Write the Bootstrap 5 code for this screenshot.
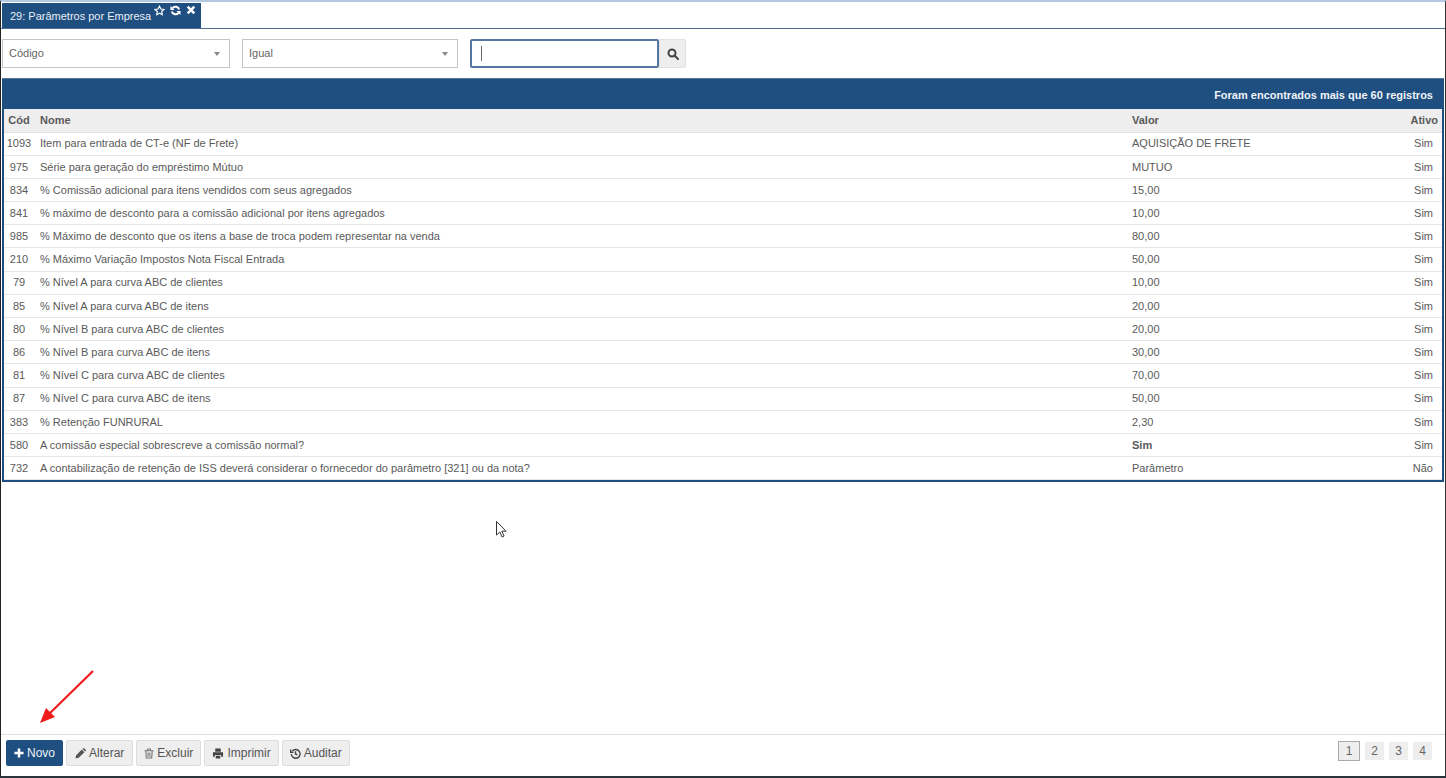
<!DOCTYPE html>
<html lang="pt-BR">
<head>
    <meta charset="UTF-8">
    <meta name="viewport" content="width=device-width, initial-scale=1.0">
    <title>Parâmetros por Empresa</title>
    <link href="https://cdn.jsdelivr.net/npm/bootstrap@5.3.3/dist/css/bootstrap.min.css" rel="stylesheet">
    <style>
        html, body { height: 100%; }
        body {
            font-family: "Liberation Sans", Arial, sans-serif;
            font-size: 11px;
            color: #555;
            background: #fff;
            overflow: hidden;
        }
        .app-frame {
            position: relative;
            height: 778px;
            display: flex;
            flex-direction: column;
            border-left: 1px solid #222;
            border-right: 1px solid #333;
            border-top: 2px solid #b4c9e4;
            border-bottom: 2px solid #2b333b;
        }
        .tab-strip {
            height: 27px;
            padding-left: 1px;
            padding-top: 1px;
            border-bottom: 1px solid #4d6f95;
        }
        .tab-item {
            width: 199px;
            height: 25px;
            background: #1f4e80;
            color: #e9eff6;
            padding: 5px 0 0 8px;
            display: flex;
            gap: 3px;
            white-space: nowrap;
        }
        .tab-icons { display: flex; gap: 5px; margin-top: -3px; height: 12px; }
        .filter-row { display: flex; margin: 10px 0 10px 1px; height: 29px; }
        .pick-box {
            height: 29px;
            border: 1px solid #c4c4c4;
            background: #fff;
            color: #666;
            padding: 0 9px 0 6px;
            display: flex;
            align-items: center;
            justify-content: space-between;
        }
        .pick-a { width: 228px; margin-right: 12px; }
        .pick-b { width: 216px; margin-right: 12px; }
        .pick-caret { width: 0; height: 0; border: 3px solid transparent; border-top: 4px solid #888; border-bottom: 0; }
        .search-box {
            width: 189px;
            height: 29px;
            border: 2px solid #56779f;
            border-radius: 2px;
            padding: 5px 0 0 9px;
        }
        .text-caret { width: 1px; height: 15px; background: #666; }
        .search-btn {
            width: 27px;
            height: 29px;
            background: #eee;
            border: 1px solid #e2e2e2;
            border-radius: 0 2px 2px 0;
            display: flex;
            align-items: center;
            justify-content: center;
        }
        .grid-panel {
            margin: 0 1px;
            border: 2px solid #1f4e80;
            border-top: 0;
        }
        .grid-title {
            height: 31px;
            background: #1f4e80;
            color: #eef3f8;
            font-weight: 700;
            margin: 0 -2px;
            padding: 8px 11px 0 0;
            text-align: right;
            border-top: 1px solid #55779c;
        }
        .data-grid { margin: 0; table-layout: fixed; color: #5a5a5a; font-size: 11px; }
        .data-grid > :not(caption) > * > * {
            padding: 0 0 0 6px;
            height: 23.2px;
            vertical-align: middle;
            color: #5a5a5a;
            border-bottom: 1px solid #e6e6e6;
            box-shadow: none;
            background: transparent;
        }
        .data-grid thead th { background: #eee; font-weight: 700; height: 23px; border-bottom: 1px solid #e2e2e2; }
        .data-grid .col-cod { width: 30px; text-align: center; padding: 0; }
        .data-grid td.col-ativo { text-align: right; padding: 0 9px 0 0; }
        .data-grid th.col-ativo { text-align: right; padding: 0 4px 0 0; width: 60px; }
        .col-name { width: 1092px; }
        .action-bar {
            margin-top: auto;
            height: 42px;
            border-top: 1px solid #ddd;
            padding: 5px 13px 0 5px;
            display: flex;
            justify-content: space-between;
        }
        .tool-row { display: flex; gap: 3px; height: 26px; }
        .tool-btn {
            height: 26px;
            padding: 0 7px;
            font-size: 12px;
            line-height: 1;
            color: #555;
            background: #eee;
            border: 1px solid #ddd;
            border-radius: 2px;
            display: inline-flex;
            align-items: center;
            gap: 3px;
        }
        .tool-btn.is-new { background: #1f4e80; border-color: #1f4e80; color: #eef3f8; }
        .tool-btn.is-edit { padding: 0 8px; }
        .page-row { display: flex; align-items: center; gap: 5px; height: 22px; }
        .page-cell {
            width: 19px;
            height: 18px;
            background: #eee;
            color: #666;
            font-size: 12px;
            display: flex;
            align-items: center;
            justify-content: center;
        }
        .page-cell.is-current { border: 1px solid #aaa; width: 22px; height: 20px; }
        .overlay-mark { position: absolute; pointer-events: none; }
    </style>
</head>
<body>
    <div class="app-frame">
        <div class="tab-strip">
            <div class="tab-item">
                <span>29: Parâmetros por Empresa</span>
                <span class="tab-icons">
                    <svg width="11" height="11" viewBox="0 0 24 24" fill="none" stroke="#fff" stroke-width="2.6"><path d="M12 2.500l2.900 6.300 6.900.8-5.100 4.700 1.400 6.800-6.100-3.400-6.100 3.400 1.400-6.800L1.900 9.600l6.900-.8z"/></svg>
                    <svg width="11" height="11" viewBox="0 0 24 24" fill="none" stroke="#fff" stroke-width="4.500"><path d="M20 10A8.500 8.500 0 0 0 5.500 6.500M4 14a8.500 8.500 0 0 0 14.500 3.500"/><path d="M1 2v9h9zM23 22v-9h-9z" fill="#fff" stroke="none"/></svg>
                    <svg width="10" height="10" viewBox="0 0 24 24" fill="none" stroke="#fff" stroke-width="6"><path d="M4 4l16 16M20 4L4 20"/></svg>
                </span>
            </div>
        </div>
        <div class="filter-row">
            <div class="pick-box pick-a"><span>Código</span><span class="pick-caret"></span></div>
            <div class="pick-box pick-b"><span>Igual</span><span class="pick-caret"></span></div>
            <div class="search-box"><div class="text-caret"></div></div>
            <div class="search-btn">
                <svg width="12" height="12" viewBox="0 0 24 24" fill="none" stroke="#444" stroke-width="4"><circle cx="10" cy="10" r="7"/><path d="M15 15l7 7" stroke-linecap="round"/></svg>
            </div>
        </div>
        <div class="grid-panel">
            <div class="grid-title">Foram encontrados mais que 60 registros</div>
            <table class="table data-grid">
                <thead>
                    <tr><th class="col-cod">Cód</th><th class="col-name">Nome</th><th>Valor</th><th class="col-ativo">Ativo</th></tr>
                </thead>
                <tbody>
                    <tr><td class="col-cod">1093</td><td>Item para entrada de CT-e (NF de Frete)</td><td>AQUISIÇÃO DE FRETE</td><td class="col-ativo">Sim</td></tr>
                    <tr><td class="col-cod">975</td><td>Série para geração do empréstimo Mútuo</td><td>MUTUO</td><td class="col-ativo">Sim</td></tr>
                    <tr><td class="col-cod">834</td><td>% Comissão adicional para itens vendidos com seus agregados</td><td>15,00</td><td class="col-ativo">Sim</td></tr>
                    <tr><td class="col-cod">841</td><td>% máximo de desconto para a comissão adicional por itens agregados</td><td>10,00</td><td class="col-ativo">Sim</td></tr>
                    <tr><td class="col-cod">985</td><td>% Máximo de desconto que os itens a base de troca podem representar na venda</td><td>80,00</td><td class="col-ativo">Sim</td></tr>
                    <tr><td class="col-cod">210</td><td>% Máximo Variação Impostos Nota Fiscal Entrada</td><td>50,00</td><td class="col-ativo">Sim</td></tr>
                    <tr><td class="col-cod">79</td><td>% Nível A para curva ABC de clientes</td><td>10,00</td><td class="col-ativo">Sim</td></tr>
                    <tr><td class="col-cod">85</td><td>% Nível A para curva ABC de itens</td><td>20,00</td><td class="col-ativo">Sim</td></tr>
                    <tr><td class="col-cod">80</td><td>% Nível B para curva ABC de clientes</td><td>20,00</td><td class="col-ativo">Sim</td></tr>
                    <tr><td class="col-cod">86</td><td>% Nível B para curva ABC de itens</td><td>30,00</td><td class="col-ativo">Sim</td></tr>
                    <tr><td class="col-cod">81</td><td>% Nível C para curva ABC de clientes</td><td>70,00</td><td class="col-ativo">Sim</td></tr>
                    <tr><td class="col-cod">87</td><td>% Nível C para curva ABC de itens</td><td>50,00</td><td class="col-ativo">Sim</td></tr>
                    <tr><td class="col-cod">383</td><td>% Retenção FUNRURAL</td><td>2,30</td><td class="col-ativo">Sim</td></tr>
                    <tr><td class="col-cod">580</td><td>A comissão especial sobrescreve a comissão normal?</td><td><b>Sim</b></td><td class="col-ativo">Sim</td></tr>
                    <tr><td class="col-cod">732</td><td>A contabilização de retenção de ISS deverá considerar o fornecedor do parâmetro [321] ou da nota?</td><td>Parâmetro</td><td class="col-ativo">Não</td></tr>
                </tbody>
            </table>
        </div>
        <div class="action-bar">
            <div class="tool-row">
                <button class="tool-btn is-new"><svg width="10" height="10" viewBox="0 0 24 24" stroke="#fff" stroke-width="6"><path d="M12 1v22M1 12h22"/></svg> Novo</button>
                <button class="tool-btn is-edit"><svg width="11" height="11" viewBox="0 0 24 24" fill="#555"><path d="M1 23l1.500-7L15 3.500 20.500 9 8 21.500zM16.500 2l1.500-1.500q1-.5 2 0l3.500 3.500q.5 1 0 2L22 7.500z"/></svg> Alterar</button>
                <button class="tool-btn"><svg width="10" height="11" viewBox="0 0 22 24" fill="none" stroke="#777" stroke-width="2.400"><path d="M4 7l1 15h12l1-15M1 6h20M7 6l1-4h6l1 4M9 10v9M13 10v9"/></svg> Excluir</button>
                <button class="tool-btn"><svg width="12" height="11" viewBox="0 0 24 24" fill="#444"><path d="M6 1h12v7H6zM1 9h22v10h-4v-4H5v4H1zM7 17h10v6H7z"/></svg> Imprimir</button>
                <button class="tool-btn"><svg width="11" height="11" viewBox="0 0 24 24" fill="none" stroke="#444" stroke-width="3"><path d="M5 7a9.500 9.500 0 1 1-2 6"/><path d="M12 7v6l4 2M1.500 3.500v6h6"/></svg> Auditar</button>
            </div>
            <div class="page-row">
                <span class="page-cell is-current">1</span>
                <span class="page-cell">2</span>
                <span class="page-cell">3</span>
                <span class="page-cell">4</span>
            </div>
        </div>
        <!-- seta vermelha e cursor por cima da tela -->
        <svg class="overlay-mark" style="left:37px;top:667px" width="58" height="56" viewBox="0 0 58 56">
            <path d="M55 2L10 46" stroke="#f01c1c" stroke-width="2.200" fill="none"/>
            <path d="M2 54l6-15 9 9z" fill="#f01c1c"/>
        </svg>
        <svg class="overlay-mark" style="left:494px;top:518px" width="14" height="20" viewBox="0 0 14 20">
            <path d="M1.500 1.500v13.500l3.300-3 2.300 5 2-1-2.300-4.800h4.300z" fill="#fff" stroke="#333" stroke-width="1"/>
        </svg>
    </div>
</body>
</html>
